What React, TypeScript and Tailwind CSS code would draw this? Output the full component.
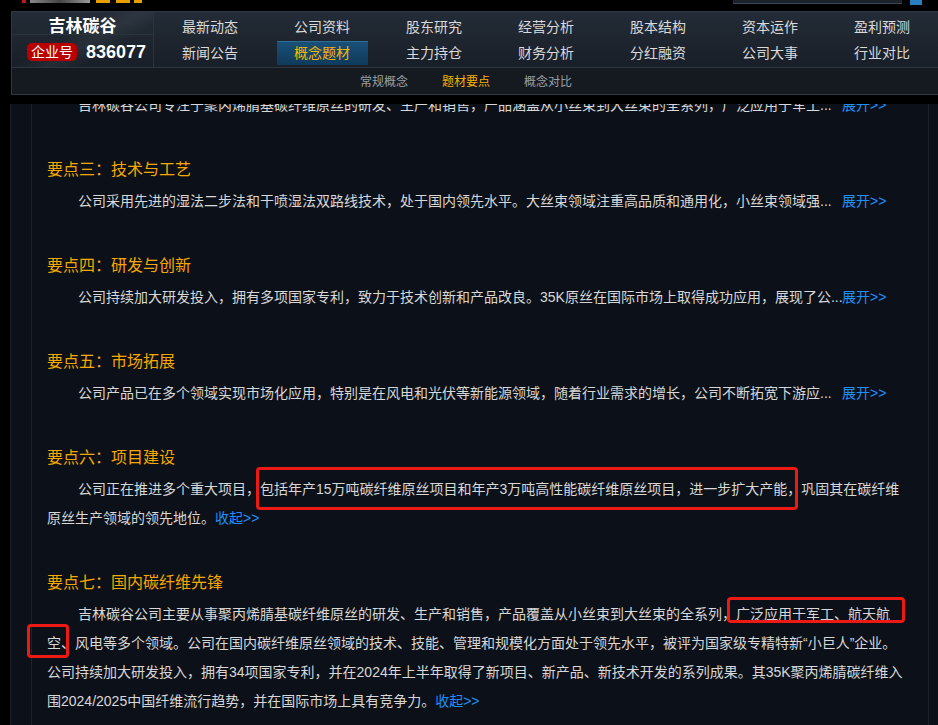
import React from 'react';

const font = "font-['Liberation_Sans','Noto_Sans_CJK_SC',sans-serif]";

const navRows = [
  ['最新动态', '公司资料', '股东研究', '经营分析', '股本结构', '资本运作', '盈利预测'],
  ['新闻公告', '概念题材', '主力持仓', '财务分析', '分红融资', '公司大事', '行业对比'],
];

const subNav = ['常规概念', '题材要点', '概念对比'];

const Header: React.FC = () => {
  return (
    <div className="ml-[11px] h-[84px] border-t border-b border-l border-[#2d3844] bg-[linear-gradient(180deg,#232c37_0%,#1a2029_60%,#161b22_100%)] flex flex-col">
      <div className="h-[55px] flex">
        {/* company block */}
        <div className="w-[144px] border-r border-[#2b333d] flex flex-col bg-[linear-gradient(150deg,transparent_40%,rgba(255,255,255,0.05)_55%,transparent_70%)]">
          <div className="h-[23px] border-b border-[#2a323c] text-center text-white font-bold text-[17px] leading-[19px] pt-[5px]">
            吉林碳谷
          </div>
          <div className="flex items-center pl-[15px] pt-[3px] h-[31px]">
            <span className="w-[50px] h-[18px] rounded-[5px] bg-[#b80000] text-white text-[14px] leading-[18px] text-center">
              企业号
            </span>
            <span className="ml-[9px] text-white font-bold text-[18px] leading-[20px]">836077</span>
          </div>
        </div>
        {/* nav grid */}
        <div className="pt-[2px] flex flex-col">
          {navRows.map((row, ri) => (
            <div key={ri} className="flex h-[26px]">
              {row.map((item) => {
                const active = item === '概念题材';
                return (
                  <div key={item} className="w-[112px] flex items-center justify-center">
                    {active ? (
                      <span className="w-[91px] h-[24px] bg-[linear-gradient(180deg,#1a5078_0%,#0f3a5a_100%)] border-t border-[#2f6d99] text-[#f5b800] text-[14px] leading-[23px] text-center">
                        {item}
                      </span>
                    ) : (
                      <span className="text-[#dadada] text-[14px] leading-[18px]">{item}</span>
                    )}
                  </div>
                );
              })}
            </div>
          ))}
        </div>
      </div>
      <div className="h-px bg-[#2c3540]" />
      <div className="h-[26px] bg-[#151a21] flex items-center pl-[348px] gap-[34px] pt-[2px]">
        {subNav.map((s) => (
          <span key={s} className={`text-[12px] leading-[16px] ${s === '题材要点' ? 'text-[#f5b000]' : 'text-[#9a9fa6]'}`}>
            {s}
          </span>
        ))}
      </div>
    </div>
  );
};

const Collapsed: React.FC<{ title?: string; text: string }> = ({ title, text }) => (
  <div className="mb-[33px]">
    {title && <div className="text-[16px] leading-[34px] text-[#f6a800]">{title}</div>}
    <div className="pl-[31px] text-[14px] leading-[29px] text-[#d8d8d8] whitespace-nowrap">
      <span className="inline-block w-[764px] overflow-hidden align-top">{text}...</span>
      <a href="#" className="text-[#1e8fff]">展开&gt;&gt;</a>
    </div>
  </div>
);

const Expanded: React.FC<{ title: string; lines: string[] }> = ({ title, lines }) => (
  <div className="mb-[33px]">
    <div className="text-[16px] leading-[34px] text-[#f6a800]">{title}</div>
    <div className="text-[14px] leading-[29px] text-[#d8d8d8] whitespace-nowrap">
      {lines.map((l, i) => (
        <div key={i} className={i === 0 ? 'pl-[31px]' : ''}>
          {l}
          {i === lines.length - 1 && (
            <a href="#" className="text-[#1e8fff]">收起&gt;&gt;</a>
          )}
        </div>
      ))}
    </div>
  </div>
);

export default function App() {
  return (
    <div className={`relative h-[725px] overflow-hidden bg-black ${font}`}>
      {/* top strip, page above scrolled away */}
      <div className="h-[11px] flex items-start">
        <div className="ml-[22px] w-[4px] h-[3px] bg-[#c01818]" />
        <div className="ml-[4px] w-[60px] h-[3px] bg-[linear-gradient(90deg,#888_0%,#444_50%,#999_100%)]" />
        <div className="ml-[6px] w-[14px] h-[3px] bg-[#e8a000]" />
        <div className="ml-[6px] w-[14px] h-[3px] bg-[#e8a000]" />
        <div className="ml-[4px] w-[8px] h-[3px] bg-[#e8a000]" />
        <div className="ml-[591px] w-[169px] h-[4px] bg-[#1c232b] border-b border-[#3b4653]" />
        <div className="ml-[8px] w-[12px] h-[5px] bg-[#2a7fc0]" />
      </div>

      <Header />

      <div className="h-[9px]" />

      {/* content panel */}
      <div className="ml-[10px] h-[621px] border-l border-[#1a212b] bg-[#0c1119] flex overflow-hidden">
        <div className="w-[20px] shrink-0" />
        <div className="w-[898px] shrink-0 border-l border-r border-[#1a222d] pl-[15px] pr-[25px] -mt-[13px]">
          <Collapsed text="吉林碳谷公司专注于聚丙烯腈基碳纤维原丝的研发、生产和销售，产品涵盖从小丝束到大丝束的全系列，广泛应用于军工" />
          <Collapsed
            title="要点三：技术与工艺"
            text="公司采用先进的湿法二步法和干喷湿法双路线技术，处于国内领先水平。大丝束领域注重高品质和通用化，小丝束领域强"
          />
          <Collapsed
            title="要点四：研发与创新"
            text="公司持续加大研发投入，拥有多项国家专利，致力于技术创新和产品改良。35K原丝在国际市场上取得成功应用，展现了公"
          />
          <Collapsed
            title="要点五：市场拓展"
            text="公司产品已在多个领域实现市场化应用，特别是在风电和光伏等新能源领域，随着行业需求的增长，公司不断拓宽下游应"
          />
          <Expanded
            title="要点六：项目建设"
            lines={[
              '公司正在推进多个重大项目，包括年产15万吨碳纤维原丝项目和年产3万吨高性能碳纤维原丝项目，进一步扩大产能，巩固其在碳纤维',
              '原丝生产领域的领先地位。',
            ]}
          />
          <Expanded
            title="要点七：国内碳纤维先锋"
            lines={[
              '吉林碳谷公司主要从事聚丙烯腈基碳纤维原丝的研发、生产和销售，产品覆盖从小丝束到大丝束的全系列，广泛应用于军工、航天航',
              '空、风电等多个领域。公司在国内碳纤维原丝领域的技术、技能、管理和规模化方面处于领先水平，被评为国家级专精特新“小巨人”企业。',
              '公司持续加大研发投入，拥有34项国家专利，并在2024年上半年取得了新项目、新产品、新技术开发的系列成果。其35K聚丙烯腈碳纤维入',
              '围2024/2025中国纤维流行趋势，并在国际市场上具有竞争力。',
            ]}
          />
        </div>
      </div>

      {/* red annotation boxes drawn over the page */}
      <div className="absolute left-[256px] top-[467px] w-[542px] h-[43px] border-[3px] border-[#ec1a12] rounded-[4px]" />
      <div className="absolute left-[727px] top-[597px] w-[178px] h-[26px] border-[3px] border-[#ec1a12] rounded-[4px]" />
      <div className="absolute left-[27px] top-[624px] w-[42px] h-[34px] border-[3px] border-[#ec1a12] rounded-[4px]" />
    </div>
  );
}
